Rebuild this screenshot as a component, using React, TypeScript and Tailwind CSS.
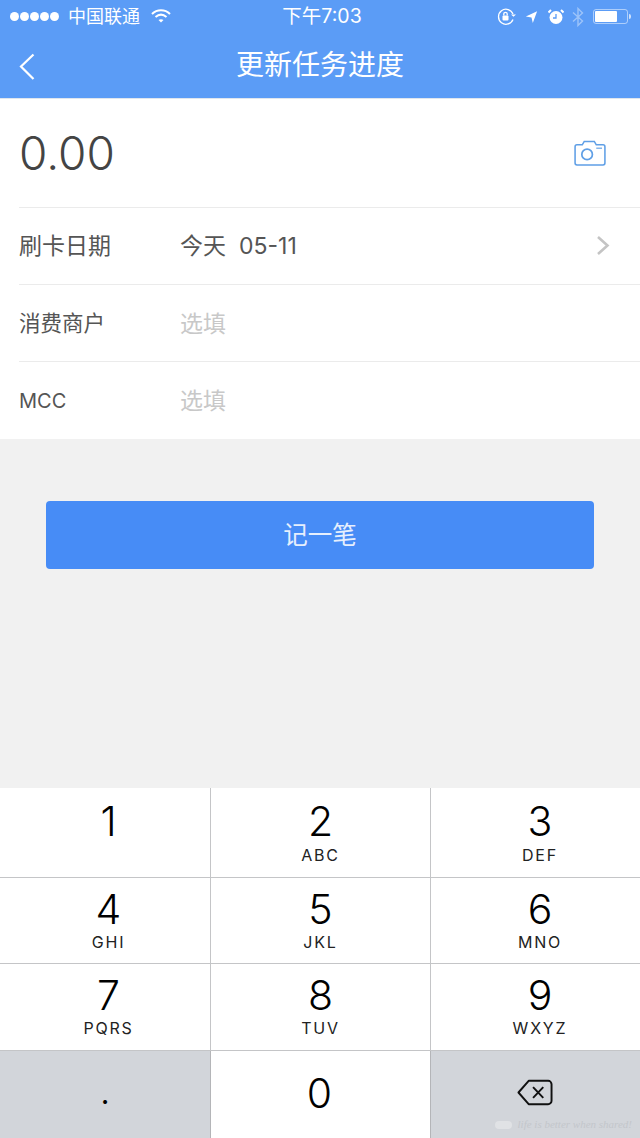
import React from 'react';

const font = "font-['Inter','Noto_Sans_CJK_SC',sans-serif]";

const keys = [
  { d: '1', s: '' },
  { d: '2', s: 'ABC' },
  { d: '3', s: 'DEF' },
  { d: '4', s: 'GHI' },
  { d: '5', s: 'JKL' },
  { d: '6', s: 'MNO' },
  { d: '7', s: 'PQRS' },
  { d: '8', s: 'TUV' },
  { d: '9', s: 'WXYZ' },
];

const rowClass = ['h-[90px] pt-[10px]', 'h-[86px] pt-[8px]', 'h-[87px] pt-[8px]'];
const colClass = ['border-r pl-[7px]', 'border-r', 'pl-[9px]'];

const StatusBar = () => (
  <div className="flex h-[33px] items-center text-white">
    <div className="flex w-[213px] items-center pl-[10px]">
      <div className="flex gap-[1px]">
        {[0, 1, 2, 3, 4].map((i) => (
          <span key={i} className="h-[9px] w-[9px] rounded-full bg-white" />
        ))}
      </div>
      <span className="ml-[9px] text-[18px] leading-none">中国联通</span>
      <svg className="ml-[11px]" width="20" height="15" viewBox="0 0 20 15" fill="none" stroke="white" strokeWidth="2">
        <path d="M1 5 C6 0 14 0 19 5" />
        <path d="M4.5 8 C8 5 12 5 15.5 8" />
        <path d="M10 13.5 L7.5 11 C9 10 11 10 12.5 11 Z" fill="white" stroke="none" />
      </svg>
    </div>
    <div className="w-[214px] pl-[4px] text-center text-[19.5px] leading-none">下午7:03</div>
    <div className="flex flex-1 items-center">
      <svg className="ml-[70px]" width="20" height="18" viewBox="0 0 20 18" fill="none" stroke="white" strokeWidth="1.3">
        <path d="M16 11.5 A7.5 7.5 0 1 1 16 6" />
        <path d="M14 6.5 L16.5 8.8 L19 6.5" fill="white" stroke="none" />
        <rect x="5.5" y="7.5" width="6" height="5" rx="1" fill="white" stroke="none" />
        <path d="M6.8 7.5 V6 a1.7 1.7 0 0 1 3.4 0 V7.5" />
      </svg>
      <svg className="ml-[8px]" width="13" height="14" viewBox="0 0 15 15" fill="white">
        <path d="M14 1 L1 7 L7.5 8 L9 14.5 Z" />
      </svg>
      <svg className="ml-[10px]" width="16" height="16" viewBox="0 0 16 16" fill="none">
        <circle cx="8" cy="8.5" r="6.5" fill="white" />
        <path d="M8 5 V9 H5" stroke="#5b9cf6" strokeWidth="1.3" />
        <path d="M0.5 3.5 L3 1 M15.5 3.5 L13 1" stroke="white" strokeWidth="2" />
      </svg>
      <svg className="ml-[8px] opacity-40" width="12" height="20" viewBox="0 0 12 20" fill="none" stroke="white" strokeWidth="1.4">
        <path d="M1 5.5 L10.5 14 L6 18.5 V1.5 L10.5 6 L1 14.5" />
      </svg>
      <div className="ml-[9px] flex items-center">
        <div className="flex h-[15px] w-[35px] rounded-[3px] border border-white/50 p-[1px]">
          <div className="h-full w-[22px] rounded-[1px] bg-white" />
        </div>
        <div className="ml-[1px] h-[5px] w-[2px] rounded-r-sm bg-white/70" />
      </div>
    </div>
  </div>
);

const FormRow = ({ label, size, children, last }: { label: string; size: string; children: React.ReactNode; last?: boolean }) => (
  <div className={`flex h-[77px] items-center ${last ? '' : 'border-b border-[#ebebeb]'}`}>
    <div className={`w-[161px] text-[#555] ${size}`}>{label}</div>
    {children}
  </div>
);

const App = () => {
  return (
    <div className={`flex h-[1138px] w-[640px] flex-col overflow-hidden bg-[#f1f1f1] ${font}`}>
      <div className="h-[99px] border-b border-[#dfe6ee] bg-[#5b9cf6]">
        <StatusBar />
        <div className="relative flex h-[65px] items-center justify-center pb-[2px]">
          <svg className="absolute left-[18px] top-[20px]" width="17" height="27" viewBox="0 0 17 27" fill="none" stroke="white" strokeWidth="2.2">
            <path d="M15.5 1.5 L3 13.5 L15.5 26" />
          </svg>
          <span className="text-[28px] leading-none text-white">更新任务进度</span>
        </div>
      </div>

      <div className="bg-white pl-[19px]">
        <div className="flex h-[109px] items-center border-b border-[#ebebeb] pr-[34px]">
          <span className="text-[46px] font-[350] leading-none text-[#444]">0.00</span>
          <svg className="ml-auto" width="32" height="26" viewBox="0 0 33 27" fill="none" stroke="#5f9fe6" strokeWidth="1.6">
            <path d="M3 5 H8.5 L10.5 1.5 H21 L23 5 H30 A2 2 0 0 1 32 7 V24 A2 2 0 0 1 30 26 H3 A2 2 0 0 1 1 24 V7 A2 2 0 0 1 3 5 Z" />
            <circle cx="13.5" cy="15" r="5.5" strokeWidth="1.8" />
            <path d="M23 8.5 H29" strokeWidth="1.2" />
          </svg>
        </div>
        <FormRow label="刷卡日期" size="text-[23px]">
          <span className="text-[23px] text-[#555]">今天</span>
          <span className="ml-[13px] text-[23px] text-[#555]">05-11</span>
          <svg className="mb-[2px] ml-auto mr-[30px]" width="14" height="21" viewBox="0 0 14 21" fill="none" stroke="#c4c4c4" strokeWidth="2.6">
            <path d="M2 2 L11.5 10.5 L2 19" />
          </svg>
        </FormRow>
        <FormRow label="消费商户" size="text-[21.5px]">
          <span className="pt-[2px] text-[23px] text-[#c8c8c8]">选填</span>
        </FormRow>
        <FormRow label="MCC" size="text-[20px]" last>
          <span className="pt-[2px] text-[23px] text-[#c8c8c8]">选填</span>
        </FormRow>
      </div>

      <div className="flex-1 px-[46px] pt-[62px]">
        <div className="flex h-[68px] items-center justify-center rounded-[4px] bg-[#478cf6] text-[24.5px] text-[#e6effd]">
          记一笔
        </div>
      </div>

      <div className="relative bg-white">
        <div className="grid grid-cols-[211px_220px_209px]">
          {keys.map((k, i) => (
            <div
              key={k.d}
              className={`flex flex-col items-center border-b border-[#c4c5c7] ${rowClass[Math.floor(i / 3)]} ${colClass[i % 3]}`}
            >
              <span className="text-[41px] font-light leading-[46px] text-black">{k.d}</span>
              <span className={`text-[16px] tracking-[1.8px] text-[#222] ${i < 3 ? 'leading-[22px]' : 'leading-[20px]'}`}>{k.s}</span>
            </div>
          ))}
        </div>
        <div className="grid h-[87px] grid-cols-[211px_219px_210px]">
          <div className="flex items-center justify-center border-r border-[#b4b5b8] bg-[#d2d5da] pb-[4px] text-[30px] leading-none text-black">.</div>
          <div className="flex items-start justify-center pr-[2px]">
            <span className="mt-[19px] text-[41px] font-light leading-[46px] text-black">0</span>
          </div>
          <div className="relative flex items-center justify-center border-l border-[#b4b5b8] bg-[#d2d5da] pr-[2px]">
            <svg className="mb-[4px]" width="36" height="27" viewBox="0 0 37 27" fill="none" stroke="#111" strokeWidth="2">
              <path d="M12 1.5 H32 A3.5 3.5 0 0 1 35.5 5 V22 A3.5 3.5 0 0 1 32 25.5 H12 L1.5 13.5 Z" strokeLinejoin="round" />
              <path d="M16.5 8 L27 19 M27 8 L16.5 19" />
            </svg>
            <div className="absolute bottom-[8px] right-[8px] flex items-center gap-[6px]">
              <span className="h-[8px] w-[17px] rounded-full bg-[#e0e2e5]" />
              <span className="font-['Liberation_Serif',serif] text-[11px] italic leading-none text-[#c3c6cb]">life is better when shared!</span>
            </div>
          </div>
        </div>
      </div>
    </div>
  );
};

export default App;
